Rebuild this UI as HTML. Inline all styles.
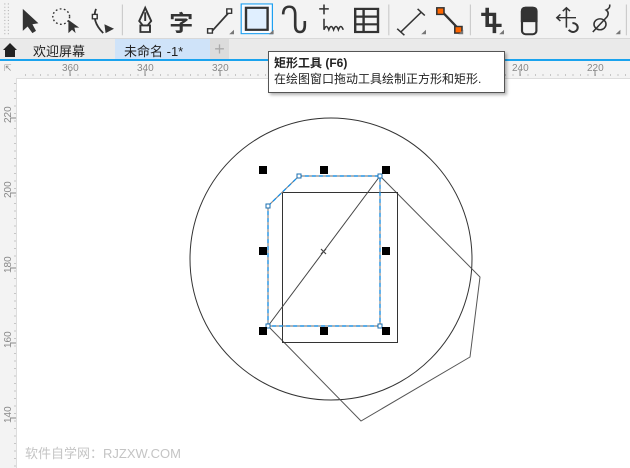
<!DOCTYPE html>
<html><head><meta charset="utf-8"><style>
*{margin:0;padding:0;box-sizing:border-box}
body{width:630px;height:468px;overflow:hidden;background:#fff;font-family:"Liberation Sans","Noto Sans CJK SC",sans-serif;position:relative}
.abs{position:absolute}
.tb{left:0;top:0;width:630px;height:39px;background:#f3f3f3;border-bottom:1px solid #d8d8d8}
.tabs{left:0;top:39px;width:630px;height:21px;background:#eaeaea}
.rul{left:0;top:61px;width:630px;height:17px;background:#f3f3f3}
.vrul{left:0;top:61px;width:17px;height:407px;background:#f3f3f3}
.tip{left:268px;top:51px;width:237px;height:42px;background:#fff;border:1px solid #555;box-shadow:2px 2px 3px rgba(0,0,0,.3);font-family:"Liberation Sans","Noto Sans CJK SC",sans-serif;font-size:12px;color:#222;padding:3px 0 0 5px;line-height:16px}
</style></head><body>
<div class="abs tb"></div>
<svg class="abs" style="left:0;top:0" width="630" height="39" fill="none" stroke="#333" stroke-width="2">
<g transform="translate(0,-1) scale(1.2,1.1)">
<line x1="4" y1="4" x2="4" y2="34" stroke="#bbb" stroke-dasharray="1 2" stroke-width="1"/>
<line x1="7" y1="4" x2="7" y2="34" stroke="#bbb" stroke-dasharray="1 2" stroke-width="1"/>
<line x1="102" y1="5" x2="102" y2="33" stroke="#ccc" stroke-width="1"/>
<line x1="324" y1="5" x2="324" y2="33" stroke="#ccc" stroke-width="1"/>
<line x1="392" y1="5" x2="392" y2="33" stroke="#ccc" stroke-width="1"/>
<line x1="522" y1="5" x2="522" y2="33" stroke="#ccc" stroke-width="1"/>
<path d="M19 9 L19 29 L23 25 L27 31 L30 29 L27 23 L32 22 Z" fill="#333" stroke="none"/>
<circle cx="51" cy="16" r="7" stroke-dasharray="1.5 2" stroke-width="1.2"/>
<path d="M57 19 L57 31 L60 28 L63 31 L62 26 L66 26Z" fill="#333" stroke="none"/>
<path d="M80 9 Q76 20 86 31" stroke-width="1.5"/><rect x="77" y="14" width="4" height="4" fill="#fff" stroke-width="1.2"/>
<path d="M87 23 L95 27 L88 31Z" fill="#333" stroke="none"/>
<path d="M121 8 L116 20 L119 24 L123 24 L126 20 Z M121 12 V20" stroke-width="1.6"/><rect x="117" y="24" width="8" height="6" stroke-width="1.6"/>
<text x="141" y="29" font-size="20" font-weight="bold" fill="#333" stroke="none" font-family="Noto Sans CJK SC">字</text>
<path d="M176 30 L191 12" stroke-width="1.5"/><rect x="173" y="27" width="4" height="4" fill="#fff" stroke-width="1.2"/><rect x="189" y="9" width="4" height="4" fill="#fff" stroke-width="1.2"/>
<rect x="201" y="4.5" width="26" height="27" stroke="#1ea0f0" stroke-width="1" fill="#f8fbff"/>
<rect x="205" y="8" width="18" height="20" fill="#e0efff" stroke-width="2"/>
<path d="M236 14 Q236 7 241 7 Q246 7 246 14 L246 24 Q246 30 250 30 Q254 30 254 24 L254 20" stroke-width="2.2"/>
<path d="M270 5 V14 M266 9 H274 M270 18 V28 Q272 22 274 28 Q276 22 278 28 Q280 22 282 28 Q284 22 286 28" stroke-width="1.3"/>
<rect x="296" y="9" width="19" height="21" stroke-width="2"/><path d="M296 16 H315 M296 23 H315 M303 9 V30" stroke-width="2"/>
<path d="M334 30 L351 12 M331 27 L337 33 M348 9 L354 15" stroke-width="1.3"/>
<path d="M368 11 L382 27" stroke-width="2"/><rect x="364" y="8" width="6" height="6" fill="#f60" stroke-width="1.3"/><rect x="379" y="25" width="6" height="6" fill="#f60" stroke-width="1.3"/>
<path d="M406 8 V24 H418 M401 14 H412 V31" stroke-width="3"/>
<rect x="435" y="8" width="12" height="24" rx="3" stroke-width="1.8"/><path d="M435 20 H447 V11 Q447 8 444 8 H438 Q435 8 435 11Z" fill="#333"/>
<path d="M472 8 V26 M464 17 H480 M469 11 L472 8 L475 11 M467 14 L464 17 L467 20" stroke-width="1.3"/><path d="M477 22 A4 4 0 1 1 474 28" stroke-width="1.8"/>
<circle cx="500" cy="23" r="5" stroke-width="1.3"/><path d="M494 30 L506 16 Q508 12 505 10 Q509 8 508 5" stroke-width="1.3"/>
<path d="M195 32 L191 32 L195 28Z M228 32 L224 32 L228 28Z M355 32 L351 32 L355 28Z M386 32 L382 32 L386 28Z M420 32 L416 32 L420 28Z M517 32 L513 32 L517 28Z" fill="#777" stroke="none"/>
</g>
</svg>
<div class="abs tabs"></div>
<svg class="abs" style="left:2px;top:42px" width="16" height="16"><path d="M1 8 L8 1 L15 8 L13 8 L13 15 L3 15 L3 8Z" fill="#222"/></svg>
<div class="abs" style="left:33px;top:41px;font-size:13px;color:#222">欢迎屏幕</div>
<div class="abs" style="left:115px;top:39px;width:95px;height:21px;background:#cfe3f9"></div>
<div class="abs" style="left:124px;top:41px;font-size:13px;color:#222">未命名 -1*</div>
<div class="abs" style="left:210px;top:39px;width:19px;height:21px;background:#dcdcdc;color:#aaa;font-size:18px;line-height:20px;text-align:center">+</div>
<div class="abs" style="left:0;top:59px;width:630px;height:2px;background:#1aa3ee"></div>
<div class="abs rul"></div>
<div class="abs vrul"></div>
<div class="abs" style="left:17px;top:78px;width:613px;height:1px;background:#ddd"></div>
<div class="abs" style="left:16px;top:78px;width:1px;height:390px;background:#ddd"></div>
<svg class="abs" style="left:0;top:61px" width="630" height="407">
<g stroke="#888" stroke-width="1">
<path d="M70 9V15 M145 9V15 M220 9V15 M295 9V15 M370 9V15 M445 9V15 M520 9V15 M595 9V15" />
<path d="M10 57H16 M10 132H16 M10 207H16 M10 282H16 M10 357H16"/>
</g>
<g fill="#888" font-size="10" font-family="Liberation Sans">
<text x="62" y="10">360</text><text x="137" y="10">340</text><text x="212" y="10">320</text><text x="512" y="10">240</text><text x="587" y="10">220</text>
<text transform="translate(11,62) rotate(-90)">220</text><text transform="translate(11,137) rotate(-90)">200</text><text transform="translate(11,212) rotate(-90)">180</text><text transform="translate(11,287) rotate(-90)">160</text><text transform="translate(11,362) rotate(-90)">140</text>
<text x="4" y="10" font-size="9">⇱</text>
</g>
<path d="M25 14 H630" stroke="#999" stroke-dasharray="1 6.5"/>
<path d="M15 22 V407" stroke="#999" stroke-dasharray="1 6.5"/>
</svg>
<svg class="abs" style="left:0;top:0" width="630" height="468" fill="none">
<circle cx="331" cy="259" r="141" stroke="#333" stroke-width="1"/>
<polyline points="380,176 480,277 470,357 361,421 268,326" stroke="#555" stroke-width="1"/>
<rect x="282.5" y="192.5" width="115" height="150" stroke="#333" stroke-width="1"/>
<path d="M268 326 L380 176" stroke="#444" stroke-width="1"/>
<polygon points="268,206 299,176 380,176 380,326 268,326" stroke="#888" stroke-width="1.2"/>
<polygon points="268,206 299,176 380,176 380,326 268,326" stroke="#0a8ff0" stroke-width="1.2" stroke-dasharray="4 3"/>
<g fill="#fff" stroke="#1a6fb0" stroke-width="1">
<rect x="266" y="204" width="4" height="4"/><rect x="297" y="174" width="4" height="4"/><rect x="378" y="174" width="4" height="4"/><rect x="378" y="324" width="4" height="4"/><rect x="266" y="324" width="4" height="4"/>
</g>
<g fill="#000">
<rect x="259" y="166" width="8" height="8"/><rect x="320" y="166" width="8" height="8"/><rect x="382" y="166" width="8" height="8"/>
<rect x="259" y="247" width="8" height="8"/><rect x="382" y="247" width="8" height="8"/>
<rect x="259" y="327" width="8" height="8"/><rect x="320" y="327" width="8" height="8"/><rect x="382" y="327" width="8" height="8"/>
</g>
<path d="M321 249 L326 254 M326 249 L321 254" stroke="#444" stroke-width="1.2"/>
</svg>
<div class="abs tip"><b>矩形工具 (F6)</b><br>在绘图窗口拖动工具绘制正方形和矩形.</div>
<div class="abs" style="left:25px;top:443px;font-size:13px;color:#c4c4c4">软件自学网：RJZXW.COM</div>
</body></html>
